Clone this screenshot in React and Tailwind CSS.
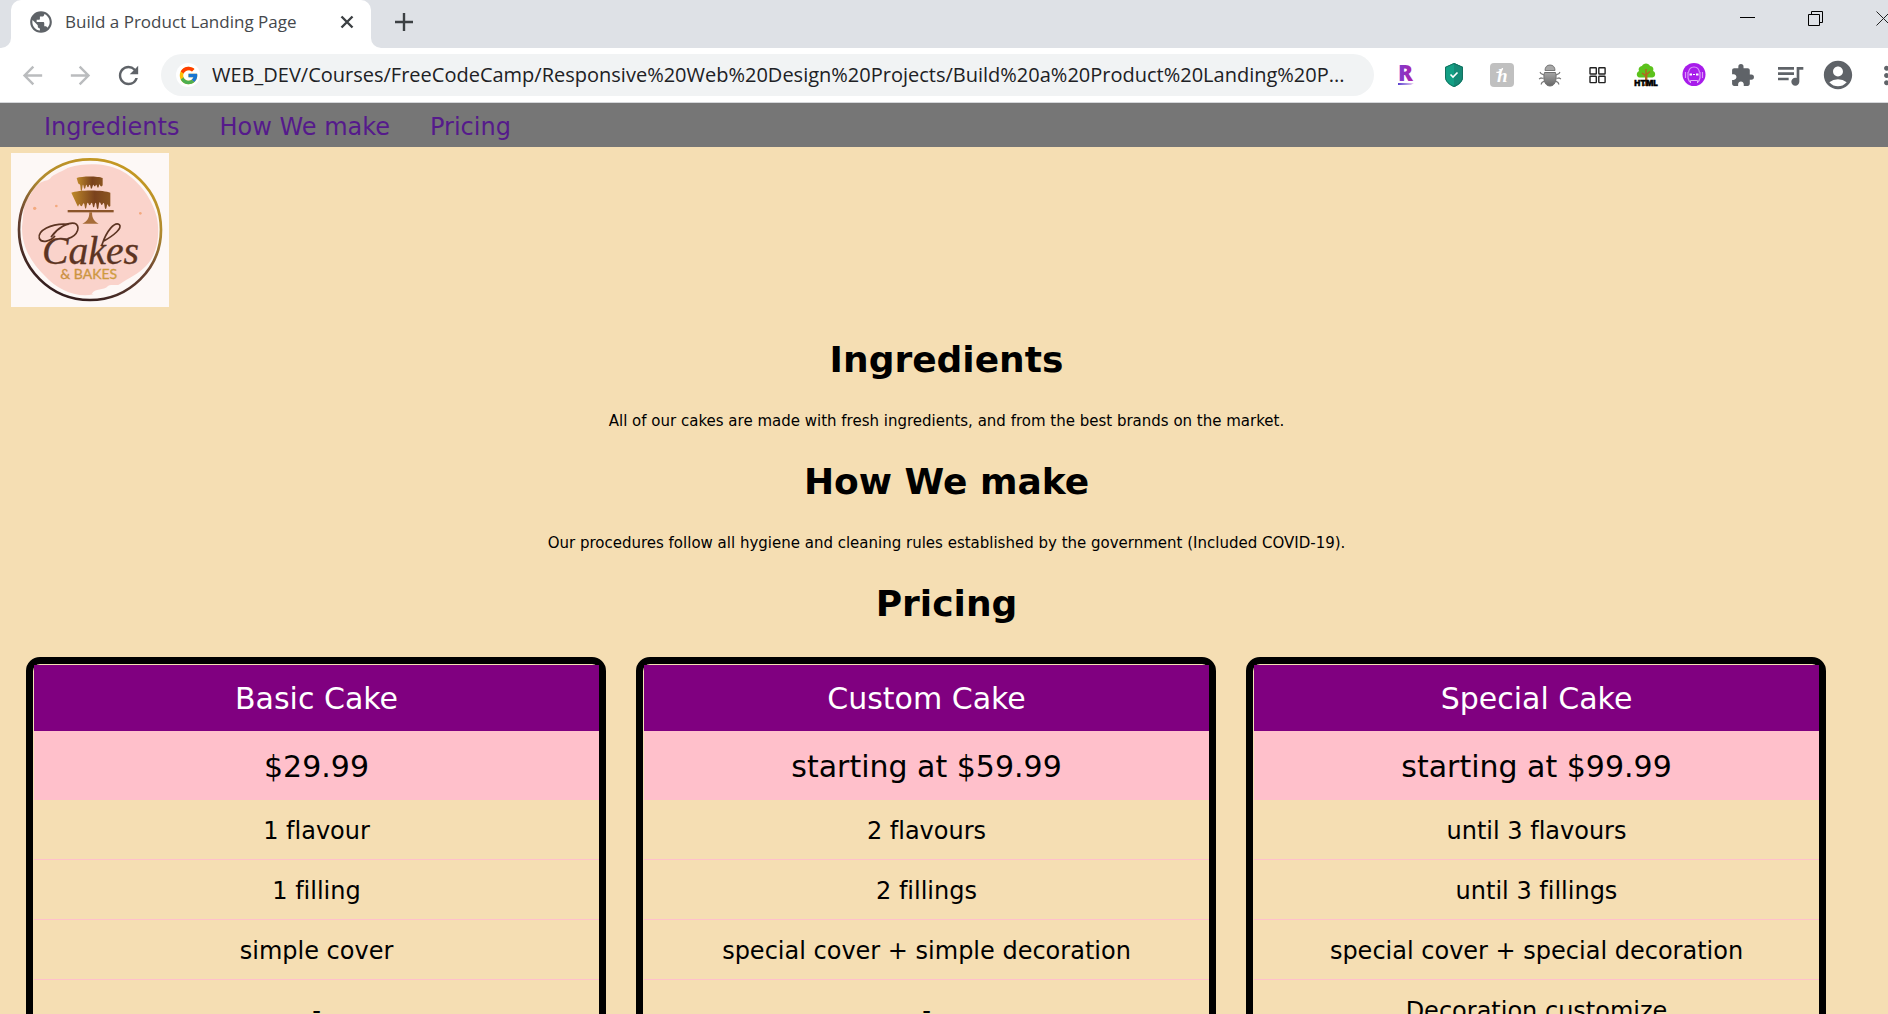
import React from "react";
import {
  MdPublic,
  MdArrowBack,
  MdArrowForward,
  MdRefresh,
  MdExtension,
  MdQueueMusic,
  MdAccountCircle,
  MdMoreVert,
} from "react-icons/md";
import { FcGoogle } from "react-icons/fc";

const plans = [
  {
    name: "Basic Cake",
    price: "$29.99",
    items: ["1 flavour", "1 filling", "simple cover", "-"],
  },
  {
    name: "Custom Cake",
    price: "starting at $59.99",
    items: ["2 flavours", "2 fillings", "special cover + simple decoration", "-"],
  },
  {
    name: "Special Cake",
    price: "starting at $99.99",
    items: [
      "until 3 flavours",
      "until 3 fillings",
      "special cover + special decoration",
      "Decoration customize",
    ],
  },
];

const sections = [
  {
    id: "ingredients",
    title: "Ingredients",
    text: "All of our cakes are made with fresh ingredients, and from the best brands on the market.",
  },
  {
    id: "how",
    title: "How We make",
    text: "Our procedures follow all hygiene and cleaning rules established by the government (Included COVID-19).",
  },
];

function RakutenIcon() {
  return (
    <svg className="overflow-visible" width="24" height="24" viewBox="0 0 24 24" aria-hidden="true">
      <defs>
        <linearGradient id="rk" x1="0" x2="1" y1="0" y2="0">
          <stop offset="0" stopColor="#7a3fd0" />
          <stop offset="1" stopColor="#b01fa8" />
        </linearGradient>
        <linearGradient id="rku" x1="0" x2="1" y1="0" y2="0">
          <stop offset="0" stopColor="#5b3fd0" />
          <stop offset="1" stopColor="#f0d8f4" />
        </linearGradient>
      </defs>
      <text x="4" y="18" fontSize="22" fontWeight="800" fontFamily="Open Sans, sans-serif" fill="url(#rk)">
        R
      </text>
      <path d="M4 20h16l-3 2H4z" fill="url(#rku)" />
    </svg>
  );
}

function ShieldIcon() {
  return (
    <svg width="24" height="24" viewBox="0 0 24 24" aria-hidden="true">
      <path d="M12 0l9 4v10c0 4.500-4 8-9 10-5-2-9-5.500-9-10V4z" fill="#13a085" />
      <path d="M12 0l9 4v10c0 4.500-4 8-9 10z" fill="#158a76" />
      <path d="M12 0.500l8.500 3.800V14c0 4.200-3.700 7.500-8.500 9.500C7.200 21.500 3.500 18.200 3.500 14V4.300z" fill="none" stroke="#15705f" />
      <path d="M8.500 11.500l2.500 2.500 4.500-4.500" fill="none" stroke="#fff" strokeWidth="1.600" />
    </svg>
  );
}

function HoneyIcon() {
  return (
    <svg width="24" height="24" viewBox="0 0 24 24" aria-hidden="true">
      <rect width="24" height="24" rx="4" fill="#c0c0c0" />
      <text
        x="7"
        y="19"
        fontSize="19"
        fontStyle="italic"
        fontWeight="700"
        fontFamily="Liberation Serif, serif"
        fill="#fff"
      >
        h
      </text>
      <path d="M6.500 9c1.500 1.200 6-1 6-4" fill="none" stroke="#fff" strokeWidth="1.400" />
    </svg>
  );
}

function BugIcon() {
  return (
    <svg width="24" height="24" viewBox="0 0 24 24" aria-hidden="true">
      <defs>
        <linearGradient id="bug" x1="0" x2="0" y1="0" y2="1">
          <stop offset="0" stopColor="#a5a5a5" />
          <stop offset="1" stopColor="#666" />
        </linearGradient>
      </defs>
      <path
        d="M6 12L3 10.500 2 9M5.500 15.500L3 15l-2 1M6.500 18L4 19.500 3 21.500M18 12l3-1.500L22 9M18.500 15.500L21 15l2 1M17.500 18l2.500 1.500 1 2"
        fill="none"
        stroke="#777"
        strokeWidth="1.200"
      />
      <path d="M7 7.500C7 4 9 2 12 2s5 2 5 5.500z" fill="#a8a8a8" stroke="#777" />
      <path d="M6.500 9.500h11c1.500 5 .5 13.500-5.500 13.500S5 14.500 6.500 9.500z" fill="url(#bug)" stroke="#707070" />
    </svg>
  );
}

function GridIcon() {
  return (
    <svg width="24" height="24" viewBox="0 0 24 24" fill="none" stroke="#222" strokeWidth="1.400" aria-hidden="true">
      <rect x="4" y="4.700" width="6.300" height="6.300" rx=".5" />
      <rect x="12.800" y="4.700" width="6.300" height="6.300" rx=".5" />
      <rect x="4" y="13.300" width="6.300" height="6.300" rx=".5" />
      <rect x="12.800" y="13.300" width="6.300" height="6.300" rx=".5" />
    </svg>
  );
}

function TreeIcon() {
  return (
    <svg className="overflow-visible" width="24" height="24" viewBox="0 0 24 24" aria-hidden="true">
      <path
        d="M8 3c1-3.500 7-3.500 8 0 3 0 4 3 3 5 3 1 3 6-.5 6.500H5.500C2 14 2 9.500 5 8c-1-2 0-4.500 3-5z"
        fill="#5cc21c"
      />
      <path d="M12 6v13M12 13l-4-3M12 12l4-3.500" stroke="#b5651d" strokeWidth="1.500" fill="none" />
      <path d="M11 12h2.400v8l1.600 3H9.500l1.500-3z" fill="#b5651d" />
      <text
        x="12"
        y="23"
        textAnchor="middle"
        fontSize="8"
        fontWeight="900"
        fontFamily="Inter, sans-serif"
        fill="#000"
        stroke="#000"
        strokeWidth=".4"
      >
        HTML
      </text>
    </svg>
  );
}

function RobotIcon() {
  return (
    <svg width="24" height="24" viewBox="0 0 24 24" aria-hidden="true">
      <circle cx="12" cy="11.500" r="11.500" fill="#a81ceb" />
      <path
        d="M6.500 9.500C7 5.500 9 4 12 4s5 1.500 5.500 5.500M3.500 9v6M20.500 9v6M6 9v6c.5 2 1 3 2 4M18 9v6c-.5 2-1 3-2 4"
        fill="none"
        stroke="#dc9af8"
        strokeWidth="1.200"
      />
      <path d="M7.500 10.500h2.500v2H7.500zM14 10.500h2.500v2H14zM11 11h2v1h-2z" fill="#fff" />
      <path d="M8.500 20v-2.500h7V20" fill="none" stroke="#e3b0fa" />
    </svg>
  );
}

function CakeLogo() {
  return (
    <svg className="block" width="158" height="154" viewBox="33 39 474 462" role="img" aria-label="Cakes & Bakes">
      <defs>
        <linearGradient id="ring" x1=".75" y1="0" x2=".3" y2="1">
          <stop offset="0" stopColor="#c79a20" />
          <stop offset=".35" stopColor="#b08a30" />
          <stop offset=".6" stopColor="#6b4432" />
          <stop offset="1" stopColor="#2e1a1c" />
        </linearGradient>
        <linearGradient id="cake" x1="0" y1="0" x2="1" y2="0">
          <stop offset="0" stopColor="#c08a2a" />
          <stop offset=".6" stopColor="#7a421c" />
          <stop offset="1" stopColor="#8a5520" />
        </linearGradient>
        <linearGradient id="bakes" x1="0" y1="0" x2="1" y2="0">
          <stop offset="0" stopColor="#c98a45" />
          <stop offset="1" stopColor="#d0a23c" />
        </linearGradient>
      </defs>
      <rect x="33" y="39" width="474" height="462" fill="#fdf8f6" />
      <path
        d="M150 110C200 70 300 60 360 90c50 25 95 80 110 140 12 55 0 110-25 140-20 25-45 38-75 55-30 25-60 15-90 38-50 12-110-15-145-55C95 370 65 320 66 260c5-30 0-70 25-95 10-25 30-40 59-55z"
        fill="#fad3cb"
      />
      <path d="M120 130c10-20 50-45 90-52-20 18-50 22-60 38-10 8-20 4-30 14z" fill="#fdf4f1" />
      <path d="M275 462c10-20 35-8 50-25 15-5 40 5 60-15 10-8 25-10 35-20-30 45-90 72-145 60z" fill="#fdf8f6" />
      <ellipse cx="270" cy="269" rx="213" ry="211" fill="none" stroke="url(#ring)" strokeWidth="8" />
      <path
        d="M230 114c15-6 64-6 78 0v21c-3 8-8 3-9-2-2 0-2 10-5 10s-3-9-5-9-2 5-5 5-2-5-4-5-3 12-6 12-2-12-5-12-2 8-5 8-3-8-5-8-2 12-5 12-3-12-5-12-2 19-5 19-2-20-5-20-4-3-5-5z"
        fill="url(#cake)"
      />
      <path
        d="M214 158c20-9 98-9 117 0v40c-4 5-7 0-8-5-3 0-2 14-6 14s-3-18-6-18-3 6-6 6-3-8-6-8-2 20-6 20-3-19-6-19-3 14-6 14-3-14-6-14-3 8-6 8-3-8-6-8-3 18-6 18-3-16-6-16-3 9-7 9-3-8-6-6-2 8-5 6z"
        fill="url(#cake)"
      />
      <rect x="203" y="210" width="138" height="7" fill="#8b552a" />
      <path d="M268 217h8c0 18 6 27 20 34h-49c15-7 21-16 21-34z" fill="#a66c38" />
      <g fill="none" stroke="#5c3422" strokeWidth="5" strokeLinecap="round">
        <path d="M204 296C236 286 242 256 224 250c-20-4-52 14-70 40" />
        <path d="M204 253c-52-4-92 20-86 42 6 16 36 8 46-6" />
        <path d="M310 304c32-18 58-40 48-50-14-10-38 18-52 60" />
      </g>
      <text
        x="126"
        y="372"
        fontSize="119"
        fontStyle="italic"
        fontFamily="Liberation Serif, serif"
        fill="#5c3422"
        stroke="#5c3422"
        strokeWidth="1"
      >
        Cakes
      </text>
      <text x="266" y="418" textAnchor="middle" fontSize="42" fontFamily="Lato, sans-serif" fill="url(#bakes)" stroke="#cc963f" strokeWidth="1">
        &amp; BAKES
      </text>
      <g fill="#f3a97e">
        <circle cx="104" cy="205" r="5" />
        <circle cx="169" cy="198" r="4" />
        <circle cx="421" cy="220" r="4" />
      </g>
    </svg>
  );
}

const extensions = [
  { label: "Rakuten", icon: <RakutenIcon /> },
  { label: "Protection", icon: <ShieldIcon /> },
  { label: "Honey", icon: <HoneyIcon /> },
  { label: "Bug report", icon: <BugIcon /> },
  { label: "Apps", icon: <GridIcon /> },
  { label: "HTML tree", icon: <TreeIcon /> },
  { label: "Assistant", icon: <RobotIcon /> },
  { label: "Extensions", icon: <MdExtension size={25} /> },
  { label: "Media", icon: <MdQueueMusic size={32} /> },
  { label: "Profile", icon: <MdAccountCircle size={34} /> },
  { label: "Menu", icon: <MdMoreVert size={29} /> },
];

function TabStrip() {
  return (
    <div className="flex h-12 bg-white">
      <div className="w-[11px] shrink-0 rounded-br-[10px] bg-[#dee1e6]" />
      <div className="w-[360px] shrink-0 bg-[#dee1e6]">
        <div className="flex h-full items-center rounded-t-[10px] bg-white pr-[17px] pb-1 pl-[17px]">
          <MdPublic size={26} className="shrink-0 text-[#5f6368]" />
          <span className="ml-[11px] flex-1 text-[17px] whitespace-nowrap text-[#45484c]">
            Build a Product Landing Page
          </span>
          <button type="button" aria-label="Close tab">
            <svg width="14" height="14" viewBox="0 0 14 14" stroke="#3c4043" strokeWidth="2.400" fill="none">
              <path d="M1.500 1.500l11 11M12.500 1.500l-11 11" />
            </svg>
          </button>
        </div>
      </div>
      <div className="flex flex-1 items-center justify-between overflow-hidden rounded-bl-[10px] bg-[#dee1e6] pl-6">
        <button type="button" aria-label="New tab" className="pb-1">
          <svg width="18" height="18" viewBox="0 0 18 18" stroke="#3c4043" strokeWidth="2.400" fill="none">
            <path d="M9 0v18M0 9h18" />
          </svg>
        </button>
        <div className="-mr-[3px] flex gap-[53px] pb-3">
          <button type="button" aria-label="Minimize">
            <svg width="15" height="15" viewBox="0 0 15 15" stroke="#000" fill="none">
              <path d="M0 6.500h15" />
            </svg>
          </button>
          <button type="button" aria-label="Restore">
            <svg width="15" height="15" viewBox="0 0 15 15" stroke="#000" fill="none">
              <path d="M.5 3.500h11v11H.5zM3.500 3.500v-3h11v11h-3" />
            </svg>
          </button>
          <button type="button" aria-label="Close window">
            <svg width="15" height="15" viewBox="0 0 15 15" stroke="#222" fill="none">
              <path d="M.5.5l14 14M14.500.5l-14 14" />
            </svg>
          </button>
        </div>
      </div>
    </div>
  );
}

function Toolbar() {
  return (
    <div className="flex h-[55px] items-center border-b border-[#d5d7da] bg-white pl-2">
      <div className="flex shrink-0 text-[#5f6368]">
        <button type="button" aria-label="Back" className="flex w-12 justify-center text-[#babcbe]">
          <MdArrowBack size={29} />
        </button>
        <button type="button" aria-label="Forward" className="flex w-12 justify-center text-[#babcbe]">
          <MdArrowForward size={29} />
        </button>
        <button type="button" aria-label="Reload" className="flex w-12 justify-center">
          <MdRefresh size={29} />
        </button>
      </div>
      <div className="ml-[9px] flex h-[42px] min-w-0 flex-1 items-center rounded-full bg-[#f1f3f4] pl-[15px]">
        <span className="flex size-6 shrink-0 items-center justify-center rounded-full bg-white">
          <FcGoogle size={21} />
        </span>
        <input
          type="text"
          aria-label="Address"
          defaultValue="WEB_DEV/Courses/FreeCodeCamp/Responsive%20Web%20Design%20Projects/Build%20a%20Product%20Landing%20P..."
          className="ml-3 min-w-0 flex-1 bg-transparent pr-3 text-xl text-[#202124] outline-none"
        />
      </div>
      <div className="-mr-[22px] ml-2 flex shrink-0 text-[#5f6368]">
        {extensions.map((e) => (
          <button key={e.label} type="button" aria-label={e.label} className="flex h-9 w-12 items-center justify-center">
            {e.icon}
          </button>
        ))}
      </div>
    </div>
  );
}

function PlanCard({ plan }) {
  return (
    <ul className="rounded-t-[14px] border-7 border-black pt-px pl-px text-center text-2xl">
      <li className="bg-[#800080] pt-0.5 text-[30px] leading-16 text-white">{plan.name}</li>
      <li className="bg-[#ffc0cb] pt-0.5 text-[30px] leading-[67px]">{plan.price}</li>
      {plan.items.map((item) => (
        <li key={item} className="border-b border-[#ffc0cb] pt-1 leading-[55px]">
          {item}
        </li>
      ))}
    </ul>
  );
}

export default function App() {
  return (
    <div className="flex h-screen flex-col overflow-hidden">
      <header className="shrink-0 font-['Open_Sans',sans-serif]">
        <TabStrip />
        <Toolbar />
      </header>
      <div className="min-h-0 flex-1 overflow-hidden bg-[#f5deb3] font-['DejaVu_Sans',sans-serif] text-black [font-variant-ligatures:none]">
        <nav className="flex h-11 items-center gap-10 bg-[#767676] pt-1 pl-11 text-2xl text-[#551a8b]">
          <a href="#ingredients">Ingredients</a>
          <a href="#how">How We make</a>
          <a href="#pricing">Pricing</a>
        </nav>
        <main>
          <div className="pt-1.5 pb-6 pl-[11px]">
            <CakeLogo />
          </div>
          <div className="pl-[5px] text-center">
            {sections.map((s) => (
              <section key={s.id} id={s.id} className="h-[122px]">
                <h1 className="text-4xl leading-[58px] font-bold">{s.title}</h1>
                <p className="mt-5 text-[15px] leading-6">{s.text}</p>
              </section>
            ))}
            <h1 id="pricing" className="text-4xl leading-[58px] font-bold">
              Pricing
            </h1>
          </div>
          <div className="mt-6 mr-[62px] ml-[26px] grid grid-cols-3 gap-[30px]">
            {plans.map((p) => (
              <PlanCard key={p.name} plan={p} />
            ))}
          </div>
        </main>
      </div>
    </div>
  );
}
